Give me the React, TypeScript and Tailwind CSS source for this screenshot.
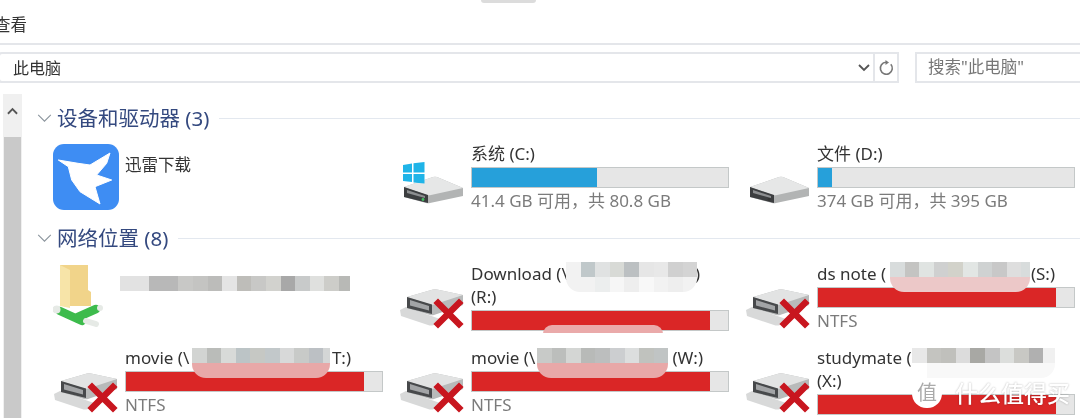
import React from 'react';

const FONT = "font-['Noto_Sans','Noto_Sans_CJK_SC',sans-serif]";

// mosaic strips standing in for the redacted network paths
const Mosaic: React.FC<{ className: string; cells: string[]; faint?: string[] }> = ({ className, cells, faint }) => (
  <div className={`absolute overflow-hidden ${className}`}>
    <div className="flex">
      {cells.map((c, i) => (
        <div key={i} className="h-[15px] w-[14.6px] shrink-0" style={{ background: c }} />
      ))}
    </div>
    {faint && (
      <div className="flex overflow-hidden rounded-b-[14px]">
        {faint.map((c, i) => (
          <div key={i} className="h-[15px] w-[14.6px] shrink-0" style={{ background: c }} />
        ))}
      </div>
    )}
  </div>
);

const Bar: React.FC<{ pct: number; color: 'blue' | 'red' }> = ({ pct, color }) => (
  <div className="mt-[2px] mb-[1px] h-[21px] w-[258px] border border-[#c4c8c8] bg-[#e6e6e6]">
    <div
      className={color === 'blue' ? 'h-full bg-[#26a0da]' : 'h-full bg-[#da2626]'}
      style={{ width: `${pct}%` }}
    />
  </div>
);

const DriveIcon: React.FC<{ win?: boolean; led?: string }> = ({ win, led = '#333' }) => (
  <svg viewBox="0 0 64 64" className="h-[64px] w-[64px] shrink-0">
    <path d="M4 42 L33 32 Q35 31.5 37 32 L63 43 L63 51 L30 58 Q28 58.5 26 58 L4 52 Z" fill="#b2b4b4" />
    <path d="M4 42 L33 32 Q35 31.5 37 32 L63 43 L31 50 Q29 50.5 27 50 Z" fill="#e6e7e7" />
    <path d="M4 42 L28 50 L28 58 L4 52 Z" fill="#3c3e40" />
    <path d="M7 45 L25 51 L25 53 L7 48 Z" fill="#8c8e90" />
    <circle cx="23" cy="54.5" r="1.4" fill={led} />
    {win && (
      <g fill="#1fb4e8">
        <path d="M3 20 L12 18.5 L12 27.5 L3 27.5 Z" />
        <path d="M13.5 18.2 L24.5 17 L24.5 27.5 L13.5 27.5 Z" />
        <path d="M3 29 L12 29 L12 37 L3 36 Z" />
        <path d="M13.5 29 L24.5 29 L24.5 38.5 L13.5 37.5 Z" />
      </g>
    )}
  </svg>
);

const BrokenDrive: React.FC = () => (
  <svg viewBox="0 0 64 64" className="h-[64px] w-[64px] shrink-0">
    <path d="M0 45 L6 42 L40 54 L34 60 Q31 61 28 60 L1 51 Z" fill="#d8d9d9" />
    <path d="M7 32 L33 24.5 Q35 24 37 24.5 L63 30 L63 40 L34 50 Q32 50.5 30 50 L7 43 Z" fill="#b8baba" />
    <path d="M7 32 L33 24.5 Q35 24 37 24.5 L63 30 L34 39.5 Q32 40 30 39.5 Z" fill="#e2e3e3" />
    <path d="M7 32 L32 39.5 L32 49 L7 43 Z" fill="#47494b" />
    <path d="M10 35 L29 41 L29 45.5 L10 40.5 Z" fill="#a2a4a6" />
    <path d="M38 38 L59 59 M59 38 L38 59" stroke="#c8161f" strokeWidth="6.5" strokeLinecap="square" />
  </svg>
);

const FolderIcon: React.FC = () => (
  <svg viewBox="0 0 50 62" className="h-[62px] w-[50px] shrink-0">
    <path d="M7 0 L35 0 L35 25 L38 27 L38 41 L7 41 Z" fill="#f1d48a" />
    <path d="M7 0 L17 5 L17 43 L7 41 Z" fill="#f7e4a8" />
    <path d="M7 46 L29 56" stroke="#3dbb4c" strokeWidth="8.5" strokeLinecap="round" />
    <path d="M25 52 L43 44" stroke="#3dbb4c" strokeWidth="8.5" strokeLinecap="round" />
    <circle cx="3.5" cy="44.5" r="4" fill="#e6eae6" />
    <circle cx="47" cy="43" r="3" fill="#e6eae6" />
    <path d="M33 56 L43 59" stroke="#e6eae6" strokeWidth="6" strokeLinecap="round" />
  </svg>
);

const ThunderIcon: React.FC = () => (
  <svg viewBox="0 0 66 66" className="h-[66px] w-[66px] shrink-0">
    <rect width="66" height="66" rx="11" fill="#3e8df3" />
    <path
      d="M5.3 16 L25 19.3 L37 21 L57 9 L53.7 19.3 L43.7 31 L58.7 36 L42 42.7 L47 60 L27 47.7 L18.7 36 L15.3 22.7 Z"
      fill="#fff"
      stroke="#fff"
      strokeLinejoin="round"
    />
  </svg>
);

const SectionHeader: React.FC<{ title: string; className: string }> = ({ title, className }) => (
  <div className={`flex items-center ${className}`}>
    <svg viewBox="0 0 16 10" className="ml-[1px] h-[9px] w-[15px] shrink-0">
      <path d="M1 1 L8 8 L15 1" fill="none" stroke="#8a949c" strokeWidth="1.2" />
    </svg>
    <span className="ml-[5px] text-[20.5px] leading-[24px] whitespace-nowrap text-[#34497f]">{title}</span>
    <div className="ml-[10px] h-px flex-1 bg-[#e3e8ef]" />
  </div>
);

const Tile: React.FC<{ icon: React.ReactNode; className?: string; children: React.ReactNode }> = ({ icon, className = '', children }) => (
  <div className={`flex h-[70px] items-center ${className}`}>
    <div className="flex w-[72px] shrink-0 pl-px">{icon}</div>
    <div className="w-[258px] text-[17px] leading-[23px] whitespace-nowrap text-[#333]">{children}</div>
  </div>
);

export default function App() {
  return (
    <div className={`relative h-[418px] w-[1080px] overflow-hidden bg-white blur-[0.7px] ${FONT}`}>
      {/* ribbon */}
      <div className="relative h-[45px] border-b-2 border-[#e4e6ea]">
        <div className="absolute top-0 left-[481px] h-[3px] w-[55px] rounded-b-[3px] bg-[#dcdcdc]" />
        <div className="absolute top-[13px] -left-[6px] text-[16.5px] leading-[24px] text-[#333]">查看</div>
      </div>

      {/* address bar */}
      <div className="mt-[7px] flex h-[31px] items-stretch">
        <div className="-ml-[2px] flex w-[877px] items-center rounded-l-[4px] border-2 border-[#e4e6ea] pr-[3px] pl-[13px] text-[16px] text-[#333]">
          <span className="flex-1">此电脑</span>
          <svg viewBox="0 0 12 8" className="h-[8px] w-[12px]">
            <path d="M1 1 L6 6 L11 1" fill="none" stroke="#555" strokeWidth="1.8" />
          </svg>
        </div>
        <div className="flex w-[24px] items-center justify-center border-y-2 border-r-2 border-[#e4e6ea]">
          <svg viewBox="0 0 16 16" className="h-[16px] w-[16px]">
            <path d="M12.8 4.2 A6 6 0 1 1 8 2.2" fill="none" stroke="#777" strokeWidth="1.6" />
            <path d="M7.5 0 L11 2.4 L7.5 5 Z" fill="#777" />
          </svg>
        </div>
        <div className="ml-[16px] flex flex-1 items-center border-2 border-r-0 border-[#e4e6ea] pl-[11px] text-[16.5px] text-[#777]">
          搜索"此电脑"
        </div>
      </div>

      <div className="mt-[11px] flex">
        {/* scrollbar */}
        <div className="ml-[3px] h-[325px] w-[19px] bg-[#f0f0f0]">
          <div className="flex h-[43px] justify-center pt-[13px]">
            <svg viewBox="0 0 12 8" className="h-[8px] w-[11px]">
              <path d="M1 7 L6 2 L11 7" fill="none" stroke="#555" strokeWidth="2" />
            </svg>
          </div>
          <div className="mx-px h-[282px] bg-[#c9c9c9]" />
        </div>

        {/* content */}
        <div className="ml-[14px] flex-1">
          <SectionHeader title="设备和驱动器 (3)" className="mt-[12px]" />

          <div className="mt-[12px] grid grid-cols-[348px_346px_330px]">
            <div className="flex items-start pt-[2px] pl-[17px]">
              <ThunderIcon />
              <span className="mt-[9px] ml-[6px] text-[16.5px] leading-[24px] text-[#333]">迅雷下载</span>
            </div>
            <Tile icon={<DriveIcon win led="#3fbf5f" />} className="ml-[15px]">
              <div>系统 (C:)</div>
              <Bar pct={48.7} color="blue" />
              <div className="text-[#7b7b7b]">41.4 GB 可用，共 80.8 GB</div>
            </Tile>
            <Tile icon={<DriveIcon />} className="ml-[15px]">
              <div>文件 (D:)</div>
              <Bar pct={5.3} color="blue" />
              <div className="text-[#7b7b7b]">374 GB 可用，共 395 GB</div>
            </Tile>
          </div>

          <SectionHeader title="网络位置 (8)" className="mt-[14px]" />

          <div className="mt-[12px] grid grid-cols-[348px_346px_330px]">
            <div className="flex h-[70px] items-start pt-[3px] pl-[17px]">
              <FolderIcon />
            </div>
            <Tile icon={<BrokenDrive />} className="ml-[15px]">
              <div className="flex w-[229px] justify-between">
                <span>Download (\</span>
                <span>)</span>
              </div>
              <div>(R:)</div>
              <Bar pct={92.8} color="red" />
            </Tile>
            <Tile icon={<BrokenDrive />} className="ml-[15px]">
              <div className="flex w-[238px] justify-between">
                <span>ds note (</span>
                <span>(S:)</span>
              </div>
              <Bar pct={92.8} color="red" />
              <div className="text-[#7b7b7b]">NTFS</div>
            </Tile>
          </div>

          <div className="mt-[14px] grid grid-cols-[348px_346px_330px]">
            <Tile icon={<BrokenDrive />} className="ml-[17px]">
              <div className="flex w-[226px] justify-between">
                <span>movie (\</span>
                <span>T:)</span>
              </div>
              <Bar pct={92.8} color="red" />
              <div className="text-[#7b7b7b]">NTFS</div>
            </Tile>
            <Tile icon={<BrokenDrive />} className="ml-[15px]">
              <div className="flex w-[232px] justify-between">
                <span>movie (\</span>
                <span>(W:)</span>
              </div>
              <Bar pct={92.8} color="red" />
              <div className="text-[#7b7b7b]">NTFS</div>
            </Tile>
            <Tile icon={<BrokenDrive />} className="ml-[15px]">
              <div>studymate (</div>
              <div>(X:)</div>
              <Bar pct={92.8} color="red" />
            </Tile>
          </div>
        </div>
      </div>

      {/* redaction smears over the paths */}
      <div className="absolute top-[325px] left-[543px] h-[9px] w-[120px] rounded-t-[9px] bg-[#eaaaaa]" />
      <div className="absolute top-[333px] left-[543px] h-[15px] w-[120px] bg-white" />
      <Mosaic
        className="top-[276px] left-[120px] w-[230px]"
        cells={['#e2e2e2', '#e2e2e2', '#b8b8b8', '#b8b8b8', '#c8c8c6', '#c4c4c2', '#bcbcba', '#e4e4e4', '#bebdb9', '#c8c8c6', '#d2d2ce', '#a8a8a8', '#c8caca', '#dfe0de', '#cdcdc9', '#b8b9b6']}
      />
      <Mosaic
        className="top-[348px] left-[192px] w-[138px]"
        cells={['#d2d4d2', '#babcb9', '#d8dad8', '#bcc4c6', '#c6c8c4', '#c2c8ca', '#d8d9d9', '#c8cac8', '#bcc0c4', '#d4d6d6']}
        faint={['#e8a8a8', '#e8a8a8', '#e8a8a8', '#e8a8a8', '#e8a8a8', '#e8a8a8', '#e8a8a8', '#e8a8a8', '#e8a8a8', '#e8a8a8']}
      />
      <Mosaic
        className="top-[262px] left-[566px] w-[131px]"
        cells={['#f2f2f2', '#c0c8ca', '#e0e2e2', '#d8dad6', '#bcc0c2', '#e6e6e6', '#e8e8e8', '#d0d0d0', '#d4d4d4']}
        faint={['#f2f2f2', '#f2f2f2', '#eceeee', '#f6f6f6', '#eeeeee', '#f8f8f8', '#f2f2f2', '#eeeeee', '#f2f2f2']}
      />
      <Mosaic
        className="top-[348px] left-[537px] w-[131px]"
        cells={['#c8cac8', '#bcbebc', '#d4d6d4', '#b8bab8', '#bcbebe', '#ccced0', '#dcdede', '#c0c2be', '#c0c4c4']}
        faint={['#e8a8a8', '#e8a8a8', '#e8a8a8', '#e8a8a8', '#e8a8a8', '#e8a8a8', '#e8a8a8', '#e8a8a8', '#e8a8a8']}
      />
      <Mosaic
        className="top-[262px] left-[890px] w-[140px]"
        cells={['#d8dcdc', '#c4c4c2', '#e0e4e2', '#cfd0d0', '#d2d2ca', '#e2e6e4', '#cfd2d2', '#c8c8c8', '#dedede', '#d8dcdc']}
        faint={['#ecc8c8', '#ecc8c8', '#ecc8c8', '#ecc8c8', '#ecc8c8', '#ecc8c8', '#ecc8c8', '#ecc8c8', '#ecc8c8', '#ecc8c8']}
      />
      <Mosaic
        className="top-[348px] left-[912px] w-[143px]"
        cells={['#e8e8e8', '#c4c4c0', '#c0c0bc', '#dcdcdc', '#a8a8a4', '#c4c4c4', '#dcdedc', '#c8c8c4', '#b0b0b0', '#f0f0f0']}
        faint={['#ffffff', '#f8f8f8', '#f8f8f8', '#f8f8f8', '#f8f8f8', '#f8f8f8', '#f8f8f8', '#f8f8f8', '#f8f8f8', '#f8f8f8']}
      />

      {/* site watermark */}
      <div className="absolute top-[378px] left-[912px] flex items-center">
        <div className="flex h-[29px] w-[30px] items-center justify-center rounded-full bg-white text-[20px] leading-none text-[#aaa]">
          值
        </div>
        <span className="ml-[13px] text-[23px] leading-[30px] font-medium whitespace-nowrap text-white [text-shadow:0_0_2px_rgba(0,0,0,0.3)]">
          什么值得买
        </span>
      </div>
    </div>
  );
}
